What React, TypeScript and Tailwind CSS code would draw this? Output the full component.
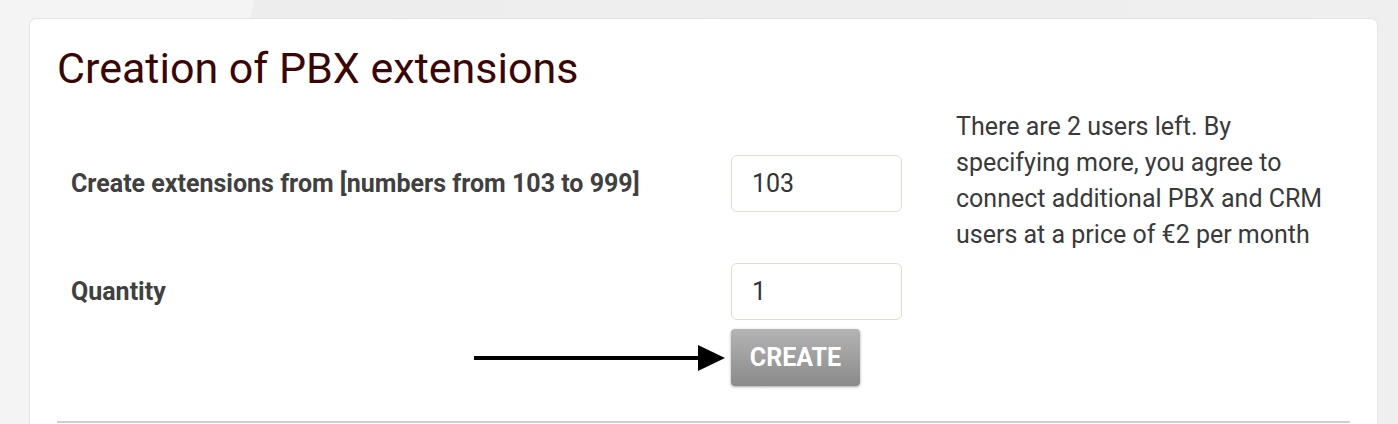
import React from "react";

const font = { fontFamily: "Roboto, 'Noto Sans', sans-serif" };

const Field = ({ label, value }: { label: string; value: string }) => (
  <div className="flex items-center">
    <label className="w-[674px] pl-[14px] text-[25px] font-bold text-[#404040]">{label}</label>
    <input
      defaultValue={value}
      className="h-[57px] w-[171px] rounded-[6px] border border-[#e2dccd] bg-white px-[20px] text-[25px] text-[#333] outline-none"
    />
  </div>
);

export default function App() {
  return (
    <div
      className="min-h-screen overflow-hidden bg-[linear-gradient(100deg,#f4f4f4_0_250px,#ededed_250px,#efefef_100%)] pt-[18px]"
      style={font}
    >
      <div className="ml-[29px] w-[1349px] rounded-t-[7px] border border-b-0 border-[#e4e4e4] bg-white px-[27px] pt-[25px]">
        {/* Title */}
        <h1 className="text-[43px] leading-[48px] font-normal text-[#3b0606]">Creation of PBX extensions</h1>

        {/* Form */}
        <div className="mt-[17px] flex">
          <div className="w-[845px] pt-[46px]">
            <Field label="Create extensions from [numbers from 103 to 999]" value="103" />
            <div className="mt-[51px]">
              <Field label="Quantity" value="1" />
            </div>
            <div className="mt-[9px] flex items-center">
              <div className="flex w-[674px] justify-end pr-[5px]">
                <svg width="252" height="28" viewBox="0 0 252 28">
                  <line x1="0" y1="14" x2="228" y2="14" stroke="#000" strokeWidth="4" />
                  <polygon points="224,1 251,14 224,27" fill="#000" />
                </svg>
              </div>
              <button className="h-[57px] w-[129px] rounded-[4px] bg-[linear-gradient(#b4b4b4,#8a8a8a)] text-[25px] font-bold text-white shadow-[0_1px_3px_rgba(0,0,0,0.35)]">
                CREATE
              </button>
            </div>
          </div>
          <p className="ml-[54px] w-[385px] text-[25px] leading-[36px] text-[#3a3a3a]">
            There are 2 users left. By specifying more, you agree to connect additional PBX and CRM users at a price of €2 per month
          </p>
        </div>

        <div className="mt-[35px] h-[2px] bg-[#cfcfcf]" />
        <div className="h-[40px]" />
      </div>
    </div>
  );
}
